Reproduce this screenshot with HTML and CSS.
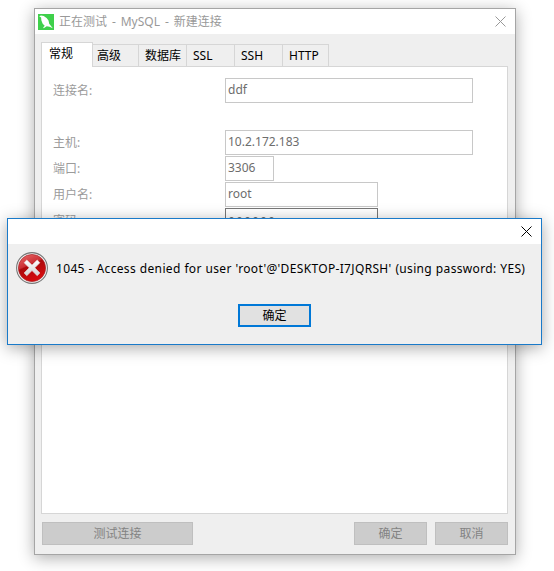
FILE: index.html
```html
<!DOCTYPE html>
<html lang="zh-CN">
<head>
<meta charset="utf-8">
<title>MySQL - 新建连接</title>
<link rel="stylesheet" href="styles.css">
</head>
<body>
<main class="window">
  <header class="titlebar">
    <svg class="app-icon" width="16" height="16" viewBox="0 0 16 16"><rect width="16" height="16" fill="#3fd04b"/><path d="M1.2 2.2 3 1.5 5.7 2 8.6 3.9 10.5 6.5 11.2 9.8 14.8 14.2 11.5 12.8 8.7 12.2 5.7 14.3 5.2 13.5 6.7 11.8 4.7 9.7 3.4 6.6 3.1 3.6Z" fill="#fff"/></svg>
    <h1 class="title">正在测试 - MySQL - 新建连接</h1>
    <svg class="close" width="11" height="11" viewBox="0 0 11 11"><path d="M.5.5l10 10M10.5.5l-10 10"/></svg>
  </header>
  <nav class="tabs">
    <span class="tab active">常规</span><span class="tab advanced">高级</span><span class="tab">数据库</span><span class="tab">SSL</span><span class="tab">SSH</span><span class="tab last">HTTP</span>
  </nav>
  <section class="panel">
    <div class="row first"><span class="label">连接名:</span><span class="field wide">ddf</span></div>
    <div class="row"><span class="label">主机:</span><span class="field wide">10.2.172.183</span></div>
    <div class="row"><span class="label">端口:</span><span class="field short">3306</span></div>
    <div class="row"><span class="label">用户名:</span><span class="field">root</span></div>
    <div class="row"><span class="label">密码:</span><span class="field password"><i></i><i></i><i></i><i></i><i></i><i></i></span></div>
  </section>
  <footer class="actions"><span class="button test">测试连接</span><span class="button ok">确定</span><span class="button">取消</span></footer>
</main>
<section class="dialog">
  <header class="dialog-title"><svg class="close" width="11" height="11" viewBox="0 0 11 11"><path d="M.5.5l10 10M10.5.5l-10 10"/></svg></header>
  <div class="message">
    <svg width="32" height="32" viewBox="0 0 32 32">
      <defs><linearGradient id="red" x1="0" y1="0" x2=".45" y2="1"><stop stop-color="#ec6d6d"/><stop offset=".45" stop-color="#cb3035"/><stop offset=".5" stop-color="#ab090c"/><stop offset="1" stop-color="#d60b0d"/></linearGradient><linearGradient id="cross" x1="0" y1="0" x2="0" y2="1"><stop stop-color="#fff"/><stop offset="1" stop-color="#d3d3d3"/></linearGradient></defs>
      <circle cx="16" cy="16" r="15.4" fill="#f4f4f4" stroke="#777" stroke-width="1.1"/><circle cx="16" cy="16" r="13.6" fill="url(#red)" stroke="#a82326" stroke-width=".7"/>
      <path d="M8.1 10.7 10.8 8 16 13.1 21.2 8 23.9 10.7 18.8 15.8 23.9 21 21.2 23.7 16 18.6 10.8 23.7 8.1 21 13.2 15.8Z" fill="url(#cross)" stroke="#e6dede" stroke-width=".6" stroke-linejoin="round"/>
    </svg>
    <p>1045 - Access denied for user 'root'@'DESKTOP-I7JQRSH' (using password: YES)</p>
  </div>
  <span class="button confirm">确定</span>
</section>
</body>
</html>
```

FILE: styles.css
```css
* { box-sizing: border-box; }
body {
  margin: 0;
  width: 554px;
  height: 571px;
  overflow: hidden;
  background: #fff;
  font: 12px/16px "Noto Sans", "Noto Sans CJK SC", sans-serif;
}
.window {
  width: 482px;
  height: 547px;
  margin: 8px 0 0 34px;
  border: 1px solid #a5a5a5;
  background: #efefef;
  box-shadow: 0 3px 15px rgba(0, 0, 0, .32);
}
.titlebar {
  height: 25px;
  display: flex;
  align-items: center;
  padding: 0 9px 0 3px;
  background: #fff;
}
.title {
  margin: 0 auto 0 5px;
  font-size: 12px;
  font-weight: 400;
  color: #999;
  white-space: nowrap;
  word-spacing: 1.8px;
}
.close { fill: none; stroke: #999; stroke-width: 1; }
.tabs {
  height: 32px;
  display: flex;
  align-items: flex-end;
  padding-left: 6px;
}
.tab {
  width: 48px;
  height: 22px;
  padding: 3px 0 0 6px;
  border: 1px solid #d6d6d6;
  border-width: 1px 0 0 1px;
  white-space: nowrap;
  color: #000;
}
.tab.active {
  position: relative;
  width: 52px;
  height: 25px;
  margin-bottom: -1px;
  padding: 3px 0 0 7px;
  border-right-width: 1px;
  background: #fff;
}
.tab.advanced { width: 45px; padding-left: 4px; border-left: 0; }
.tab.last { width: 47px; border-right-width: 1px; }
.panel {
  width: 467px;
  height: 448px;
  margin-left: 6px;
  padding: 11px 0 0 11px;
  border: 1px solid #d6d6d6;
  background: #fff;
}
.row { display: flex; height: 26px; }
.row.first { height: 52px; }
.label { width: 172px; padding-top: 5px; color: #9b9b9b; }
.field {
  width: 153px;
  height: 25px;
  padding: 3px 2px;
  border: 1px solid #c8c8c8;
  color: #6d6d6d;
}
.field.wide { width: 248px; }
.field.short { width: 49px; }
.password { display: flex; gap: 3px; padding: 8px 3px; border-color: #777; }
.password i { width: 5px; height: 5px; border-radius: 50%; background: #666; }
.actions { display: flex; margin: 8px 7px 0; }
.button {
  display: flex;
  align-items: center;
  justify-content: center;
  width: 73px;
  height: 23px;
  border: 1px solid #bfbfbf;
  background: #ccc;
  color: #838383;
}
.button.test { width: 151px; margin-right: auto; }
.button.ok { margin-right: 8px; }
.dialog {
  position: absolute;
  left: 7px;
  top: 218px;
  width: 535px;
  height: 127px;
  border: 1px solid #1a7ac9;
  background: #efefef;
  box-shadow: 0 3px 15px rgba(0, 0, 0, .34);
}
.dialog-title {
  display: flex;
  align-items: center;
  justify-content: flex-end;
  height: 25px;
  padding-right: 9px;
  background: #fff;
}
.dialog-title .close { stroke: #000; }
.message { display: flex; height: 60px; padding: 8px 0 0 8px; }
.message p {
  margin: 9px 0 0 8px;
  white-space: nowrap;
  color: #000;
  letter-spacing: .34px;
  word-spacing: .3px;
}
.button.confirm { margin-left: 230px; border: 2px solid #0078d7; background: #e1e1e1; color: #000; }
```
